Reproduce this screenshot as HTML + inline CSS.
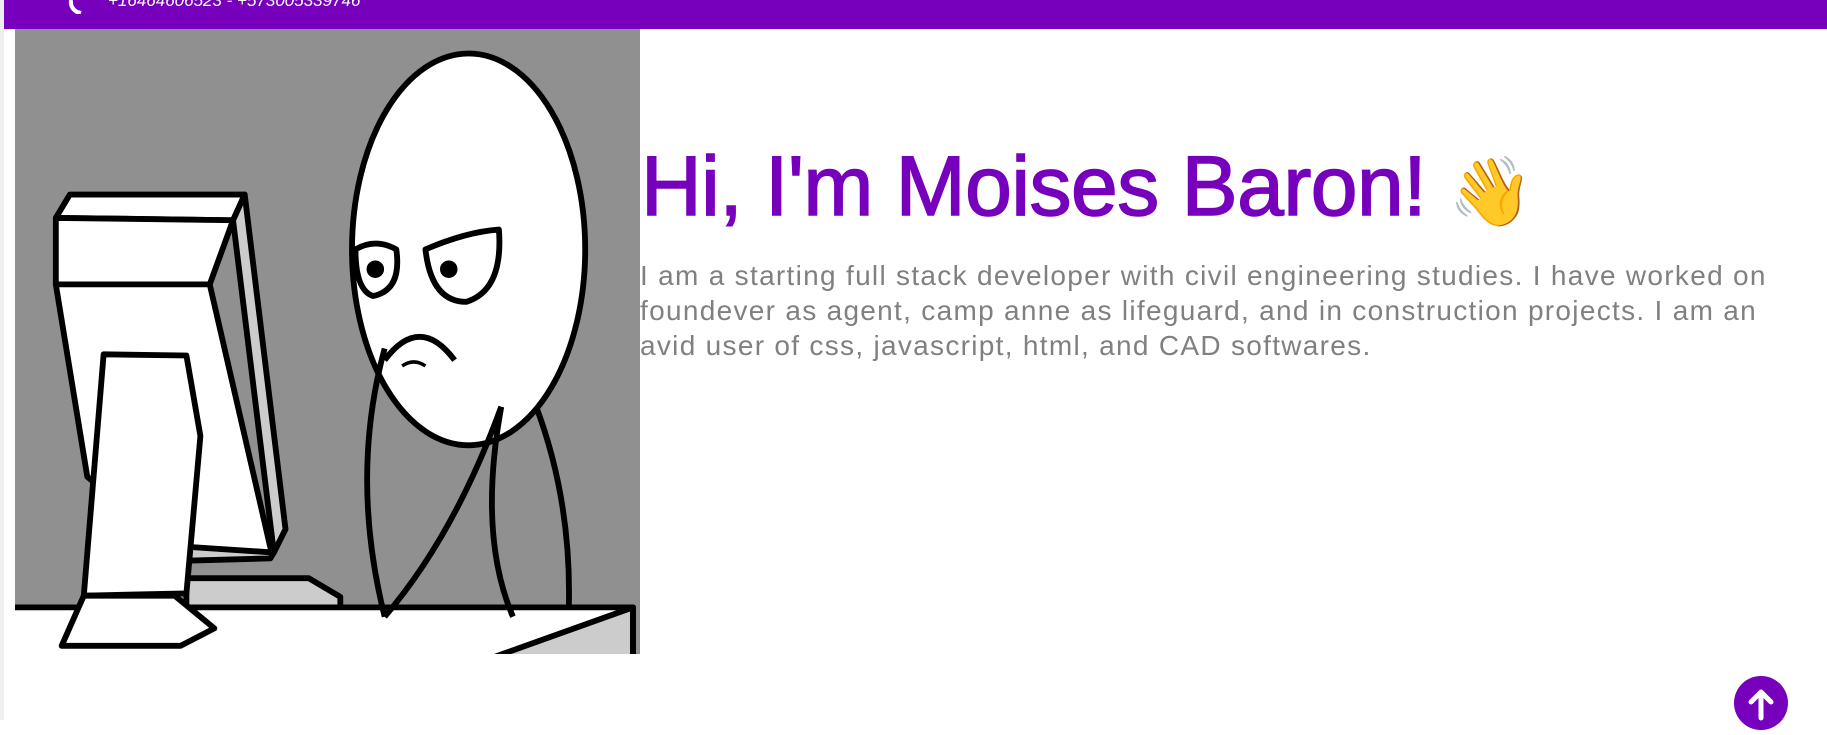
<!DOCTYPE html>
<html><head><meta charset="utf-8"><style>
html,body{margin:0;padding:0;width:1827px;height:720px;overflow:hidden;background:#fff;font-family:"Liberation Sans",sans-serif;}
.strip{position:absolute;left:0;top:0;width:4px;height:720px;background:#eee;}
.hdr{position:absolute;left:4px;top:0;width:1823px;height:29px;background:#7600bc;}
.ph{position:absolute;left:104px;top:-9px;color:#fff;font-style:italic;font-size:17px;}
.img{position:absolute;left:15px;top:29px;}
h1{position:absolute;left:641px;top:138px;margin:0;font-size:84px;font-weight:normal;color:#7600bc;white-space:nowrap;-webkit-text-stroke:1.5px #7600bc;letter-spacing:-0.5px;}
p{position:absolute;left:640px;top:258px;margin:0;width:1176px;font-size:28px;letter-spacing:1.3px;line-height:35px;color:#808080;}
.up{position:absolute;left:1734px;top:676px;width:54px;height:54px;border-radius:50%;background:#7600bc;}
</style></head><body>
<div class="strip"></div>
<div class="hdr"><svg style="position:absolute;left:64px;top:0" width="22" height="14" viewBox="0 0 22 14"><path d="M3 0 Q2 8 9 12 L13 13" stroke="#fff" stroke-width="4" fill="none"/></svg><div class="ph">+16464606523 - +573005339746</div></div>
<svg class="img" width="625" height="625" viewBox="13 16 536 536" xmlns="http://www.w3.org/2000/svg">
<rect x="13" y="16" width="536" height="545" fill="#909090"/>
<g stroke="#000" stroke-width="5" stroke-linejoin="round" fill="#fff">
<polygon points="48,178 60,158 210,158 200,180"/>
<polygon points="200,180 210,158 245,445 235,465" fill="#ccc"/>
<polygon points="48,178 200,180 180,235 48,235"/>
<polygon points="48,235 180,235 233,465 160,470 75,400"/>
<polygon points="160,460 235,465 232,470 160,472" fill="#ccc"/>
<polygon points="160,487 265,487 292,503 292,520 160,520" fill="#ccc"/>
<polygon points="89,295 160,296 172,365 160,500 72,502"/>
<polygon points="13,512 543,512 543,561 13,561" fill="#ccc"/>
<polygon points="13,512 543,512 406,561 13,561" fill="#fff" stroke="none"/>
<path d="M13,512 L543,512 L543,561 M543,512 L406,561" fill="none"/>
<polygon points="72,502 150,502 184,530 155,545 53,545"/>
<ellipse cx="402" cy="205" rx="100" ry="168"/>
<path d="M330,290 Q300,400 330,520 M430,340 Q410,450 440,520 M460,340 Q490,420 488,510" fill="none"/>
<path d="M330,520 Q390,450 430,340" fill="none"/>
<path d="M305,205 Q322,195 340,205 Q345,240 320,245 Q305,240 305,205Z"/>
<path d="M365,205 Q400,190 428,188 Q432,240 400,250 Q370,250 365,205Z"/>
<circle cx="322" cy="222" r="5" fill="#000"/><circle cx="385" cy="222" r="5" fill="#000"/>
<path d="M330,300 Q360,260 390,300" fill="none"/>
<path d="M345,305 Q355,298 365,305" fill="none" stroke-width="3"/>
</g>
</svg>
<h1>Hi, I'm Moises Baron! <span style="font-family:'Noto Color Emoji',sans-serif;font-size:68px;-webkit-text-stroke:0">👋</span></h1>
<p>I am a starting full stack developer with civil engineering studies. I have worked on foundever as agent, camp anne as lifeguard, and in construction projects. I am an avid user of css, javascript, html, and CAD softwares.</p>
<div class="up"><svg width="54" height="54" viewBox="0 0 54 54"><path d="M27 42 V16 M17 26 L27 16 L37 26" stroke="#fff" stroke-width="5" fill="none" stroke-linecap="round" stroke-linejoin="round"/></svg></div>
</body></html>
